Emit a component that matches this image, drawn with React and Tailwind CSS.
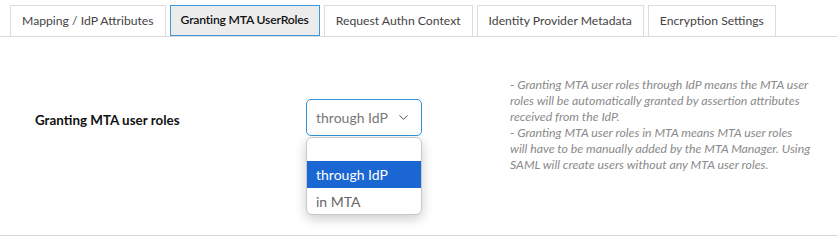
import { ChevronDown } from 'lucide-react'

const tabs = [
  'Mapping / IdP Attributes',
  'Granting MTA UserRoles',
  'Request Authn Context',
  'Identity Provider Metadata',
  'Encryption Settings',
]

const App = () => {
  const active = 1
  return (
    <div className="w-[838px] h-[244px] bg-white font-['Lato',sans-serif] text-[13px] text-[#333]">
      {/* tabs */}
      <div className="flex gap-[4px] pl-[10px] pt-[5px] border-b border-[#dcdcdc] text-[12.2px]">
        {tabs.map((t, i) => (
          <div
            key={t}
            className={
              i === active
                ? 'h-[31px] px-[10px] flex items-center border border-[#3a9ad9] bg-[#ececec] text-[#111] font-semibold tracking-[-0.2px]'
                : 'h-[31px] px-[11px] flex items-center border border-b-0 border-[#dcdcdc] text-[#444]'
            }
          >
            {t}
          </div>
        ))}
      </div>

      <div className="h-[199px] border-b border-[#d6d6d6] flex">
        <div className="w-[306px] pl-[35px] pt-[73px] font-bold text-[#111] text-[13.4px]">Granting MTA user roles</div>

        <div className="w-[116px] pt-[62px] relative">
          <div className="h-[37px] border border-[#2f95dc] rounded-[5px] flex items-center justify-between pl-[9px] pr-[10px] text-[#777] text-[14px]">
            <span>through IdP</span>
            <ChevronDown size={15} strokeWidth={1.5} className="text-[#444]" />
          </div>
          <div className="absolute left-0 top-[100px] w-[116px] bg-white border border-[#c8c8c8] rounded-[6px] shadow-[0_4px_12px_rgba(0,0,0,0.2)] overflow-hidden text-[14px]">
            <div className="h-[23px]" />
            <div className="h-[27px] bg-[#1a66d2] text-white flex items-center pl-[9px]">through IdP</div>
            <div className="h-[26px] text-[#666] flex items-center pl-[9px]">in MTA</div>
          </div>
        </div>

        <div className="pl-[88px] pt-[40px] italic text-[12.3px] leading-[16px] text-[#8a8a8a] whitespace-nowrap">
          - Granting MTA user roles through IdP means the MTA user
          <br />
          roles will be automatically granted by assertion attributes
          <br />
          received from the IdP.
          <br />
          - Granting MTA user roles in MTA means MTA user roles
          <br />
          will have to be manually added by the MTA Manager. Using
          <br />
          SAML will create users without any MTA user roles.
        </div>
      </div>
    </div>
  )
}

export default App
